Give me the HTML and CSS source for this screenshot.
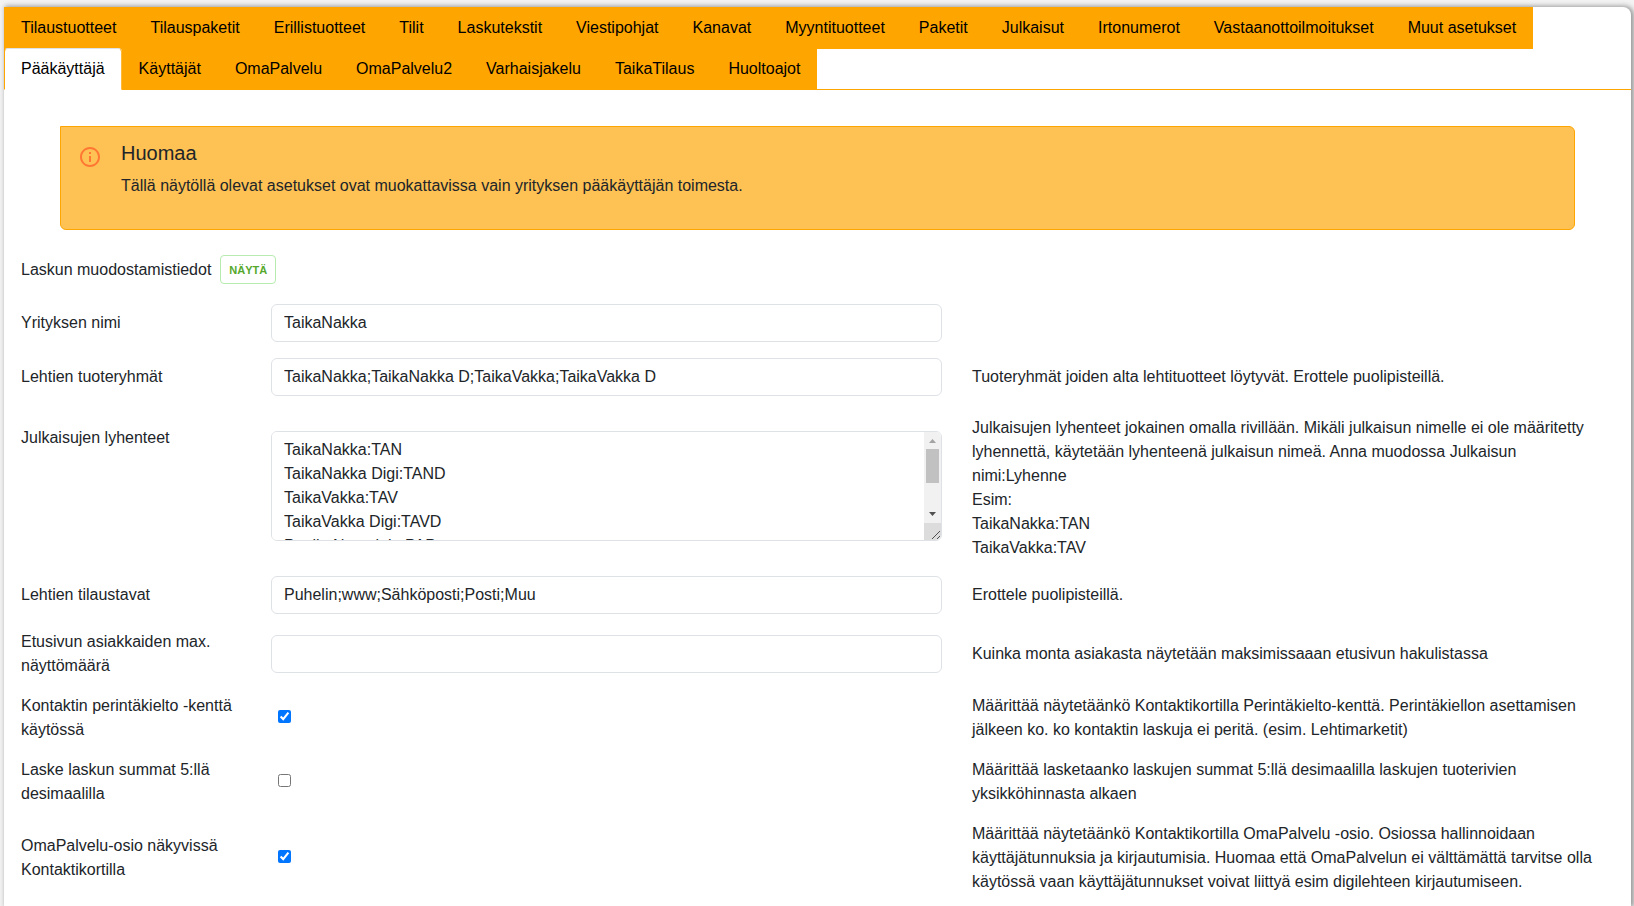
FILE: index.html
```html
<!DOCTYPE html>
<html lang="fi">
<head>
<meta charset="utf-8">
<title>Asetukset</title>
<link rel="stylesheet" href="styles.css">
</head>
<body>
<main class="panel">
  <nav class="tabs">
    <a class="tab" href="#">Tilaustuotteet</a>
    <a class="tab" href="#">Tilauspaketit</a>
    <a class="tab" href="#">Erillistuotteet</a>
    <a class="tab" href="#">Tilit</a>
    <a class="tab" href="#">Laskutekstit</a>
    <a class="tab" href="#">Viestipohjat</a>
    <a class="tab" href="#">Kanavat</a>
    <a class="tab" href="#">Myyntituotteet</a>
    <a class="tab" href="#">Paketit</a>
    <a class="tab" href="#">Julkaisut</a>
    <a class="tab" href="#">Irtonumerot</a>
    <a class="tab" href="#">Vastaanottoilmoitukset</a>
    <a class="tab" href="#">Muut asetukset</a>
    <a class="tab tab-active" href="#" aria-current="page">Pääkäyttäjä</a>
    <a class="tab" href="#">Käyttäjät</a>
    <a class="tab" href="#">OmaPalvelu</a>
    <a class="tab" href="#">OmaPalvelu2</a>
    <a class="tab" href="#">Varhaisjakelu</a>
    <a class="tab" href="#">TaikaTilaus</a>
    <a class="tab" href="#">Huoltoajot</a>
  </nav>

  <section class="notice">
    <svg class="notice-icon" viewBox="0 0 24 24" aria-hidden="true"><path fill="#ff7733" d="M11 7h2v2h-2zm0 4h2v6h-2zm1-9C6.480 2 2 6.480 2 12s4.480 10 10 10 10-4.480 10-10S17.520 2 12 2zm0 18c-4.410 0-8-3.590-8-8s3.590-8 8-8 8 3.590 8 8-3.590 8-8 8z"/></svg>
    <div>
      <h4 class="notice-title">Huomaa</h4>
      <p class="notice-text">Tällä näytöllä olevat asetukset ovat muokattavissa vain yrityksen pääkäyttäjän toimesta.</p>
    </div>
  </section>

  <form class="settings">
    <div class="billing">
      <span>Laskun muodostamistiedot</span>
      <button class="show-button" type="button">NÄYTÄ</button>
    </div>
    <div class="row">
      <label class="label" for="company">Yrityksen nimi</label>
      <div class="field"><input class="control" id="company" type="text" value="TaikaNakka"></div>
    </div>
    <div class="row">
      <label class="label" for="groups">Lehtien tuoteryhmät</label>
      <div class="field"><input class="control" id="groups" type="text" value="TaikaNakka;TaikaNakka D;TaikaVakka;TaikaVakka D"></div>
      <div class="help">Tuoteryhmät joiden alta lehtituotteet löytyvät. Erottele puolipisteillä.</div>
    </div>
    <div class="row">
      <label class="label label-top" for="short">Julkaisujen lyhenteet</label>
      <div class="field">
        <div class="area">
          <textarea class="control control-area" id="short">TaikaNakka:TAN
TaikaNakka Digi:TAND
TaikaVakka:TAV
TaikaVakka Digi:TAVD
Paulin Nautalaia:PAP
Taika Posti:TAP
Taika Extra:TAE
Taika Extra Digi:TAED
</textarea>
          <svg class="scrollbar" viewBox="0 0 17 108" aria-hidden="true">
            <path fill="#f1f1f1" d="M0 0h17v91H0z"/>
            <path fill="#dcdcdc" d="M0 91h17v17H0z"/>
            <path fill="#c1c1c1" d="M2 17h13v34H2z"/>
            <path fill="#a3a3a3" d="M5 11h7L8.500 7z"/>
            <path fill="#505050" d="M5 80h7L8.500 84z"/>
            <path stroke="#505050" d="M8 107l8-8M13 107l3-3"/>
          </svg>
        </div>
      </div>
      <div class="help help-long">Julkaisujen lyhenteet jokainen omalla rivillään. Mikäli julkaisun nimelle ei ole määritetty lyhennettä, käytetään lyhenteenä julkaisun nimeä. Anna muodossa Julkaisun nimi:Lyhenne<br>Esim:<br>TaikaNakka:TAN<br>TaikaVakka:TAV</div>
    </div>
    <div class="row">
      <label class="label" for="methods">Lehtien tilaustavat</label>
      <div class="field"><input class="control" id="methods" type="text" value="Puhelin;www;Sähköposti;Posti;Muu"></div>
      <div class="help">Erottele puolipisteillä.</div>
    </div>
    <div class="row">
      <label class="label" for="max">Etusivun asiakkaiden max. näyttömäärä</label>
      <div class="field"><input class="control" id="max" type="text"></div>
      <div class="help">Kuinka monta asiakasta näytetään maksimissaaan etusivun hakulistassa</div>
    </div>
    <div class="row">
      <label class="label" for="collect">Kontaktin perintäkielto -kenttä käytössä</label>
      <div class="field"><input class="check" id="collect" type="checkbox" checked></div>
      <div class="help">Määrittää näytetäänkö Kontaktikortilla Perintäkielto-kenttä. Perintäkiellon asettamisen jälkeen ko. ko kontaktin laskuja ei peritä. (esim. Lehtimarketit)</div>
    </div>
    <div class="row">
      <label class="label" for="decimals">Laske laskun summat 5:llä desimaalilla</label>
      <div class="field"><input class="check" id="decimals" type="checkbox"></div>
      <div class="help">Määrittää lasketaanko laskujen summat 5:llä desimaalilla laskujen tuoterivien yksikköhinnasta alkaen</div>
    </div>
    <div class="row">
      <label class="label" for="service">OmaPalvelu-osio näkyvissä Kontaktikortilla</label>
      <div class="field"><input class="check" id="service" type="checkbox" checked></div>
      <div class="help">Määrittää näytetäänkö Kontaktikortilla OmaPalvelu -osio. Osiossa hallinnoidaan käyttäjätunnuksia ja kirjautumisia. Huomaa että OmaPalvelun ei välttämättä tarvitse olla käytössä vaan käyttäjätunnukset voivat liittyä esim digilehteen kirjautumiseen.</div>
    </div>
  </form>
</main>
</body>
</html>
```
FILE: styles.css
```css
* { box-sizing: border-box; }

body {
  margin: 0;
  padding: 7px 3px 0 4px;
  background: #f3f3f3;
  color: #212529;
  font: 16px/24px "Liberation Sans", Arial, sans-serif;
}

.panel {
  min-height: calc(100vh - 7px);
  background: #fff;
  border-radius: 0 8px 0 0;
  box-shadow: 2px 0 5px 1px #999;
}

.tabs {
  display: flex;
  flex-wrap: wrap;
  border-bottom: 1px solid #ffa500;
}

.tab {
  margin-bottom: -1px;
  padding: 8px 16px;
  border: 1px solid #ffa500;
  background: #ffa500;
  color: #000;
  text-decoration: none;
}

.tab-active {
  border-color: #dee2e6 #ffa500 #fff;
  border-radius: 4px 4px 0 0;
  background: #fff;
  box-shadow: 0 -1px 0 3px #ffa500;
  clip-path: inset(0);
}

.notice {
  display: flex;
  gap: 19px;
  margin: 36px 56px 0;
  padding: 15px 17px;
  border: 1px solid #ffa500;
  border-radius: 0 6px 6px 6px;
  background: #fdc154;
}

.notice-icon {
  flex: none;
  width: 24px;
  height: 24px;
  margin-top: 3px;
}

.notice-title {
  margin: 0 0 10px;
  font-size: 20px;
  font-weight: 400;
  line-height: 22px;
}

.notice-text { margin: 0 0 16px; }

.settings { padding: 16px 31px 0 17px; }

.billing {
  display: flex;
  align-items: center;
  gap: 9px;
  padding: 9px 0 12px;
}

.show-button {
  height: 29px;
  padding: 0 8px;
  border: 1px solid #b7ebb0;
  border-radius: 4px;
  background: #fff;
  color: #55a82c;
  font: bold 11px/16px "Liberation Sans", Arial, sans-serif;
}

.row {
  display: grid;
  grid-template-columns: 250fr 701fr 628fr;
  align-items: center;
  padding: 8px 0;
}

.label { padding-right: 16px; }

.label-top {
  align-self: start;
  padding-top: 14px;
}

.help-long { padding-top: 4px; }

.field {
  display: flex;
  padding-right: 30px;
}

.control {
  width: 100%;
  height: 38px;
  padding: 6px 12px;
  border: 1px solid #dee2e6;
  border-radius: 6px;
  background: #fff;
  color: #212529;
  font: inherit;
}

.area {
  position: relative;
  flex: 1;
}

.control-area {
  display: block;
  height: 110px;
  resize: none;
}

/* Always-visible scrollbar laid over the text area's right edge */
.scrollbar {
  position: absolute;
  top: 1px;
  right: 1px;
  width: 17px;
  height: 108px;
  border-radius: 0 5px 5px 0;
  pointer-events: none;
}

.check {
  width: 13px;
  height: 13px;
  margin: 0 0 3px 7px;
}
```
